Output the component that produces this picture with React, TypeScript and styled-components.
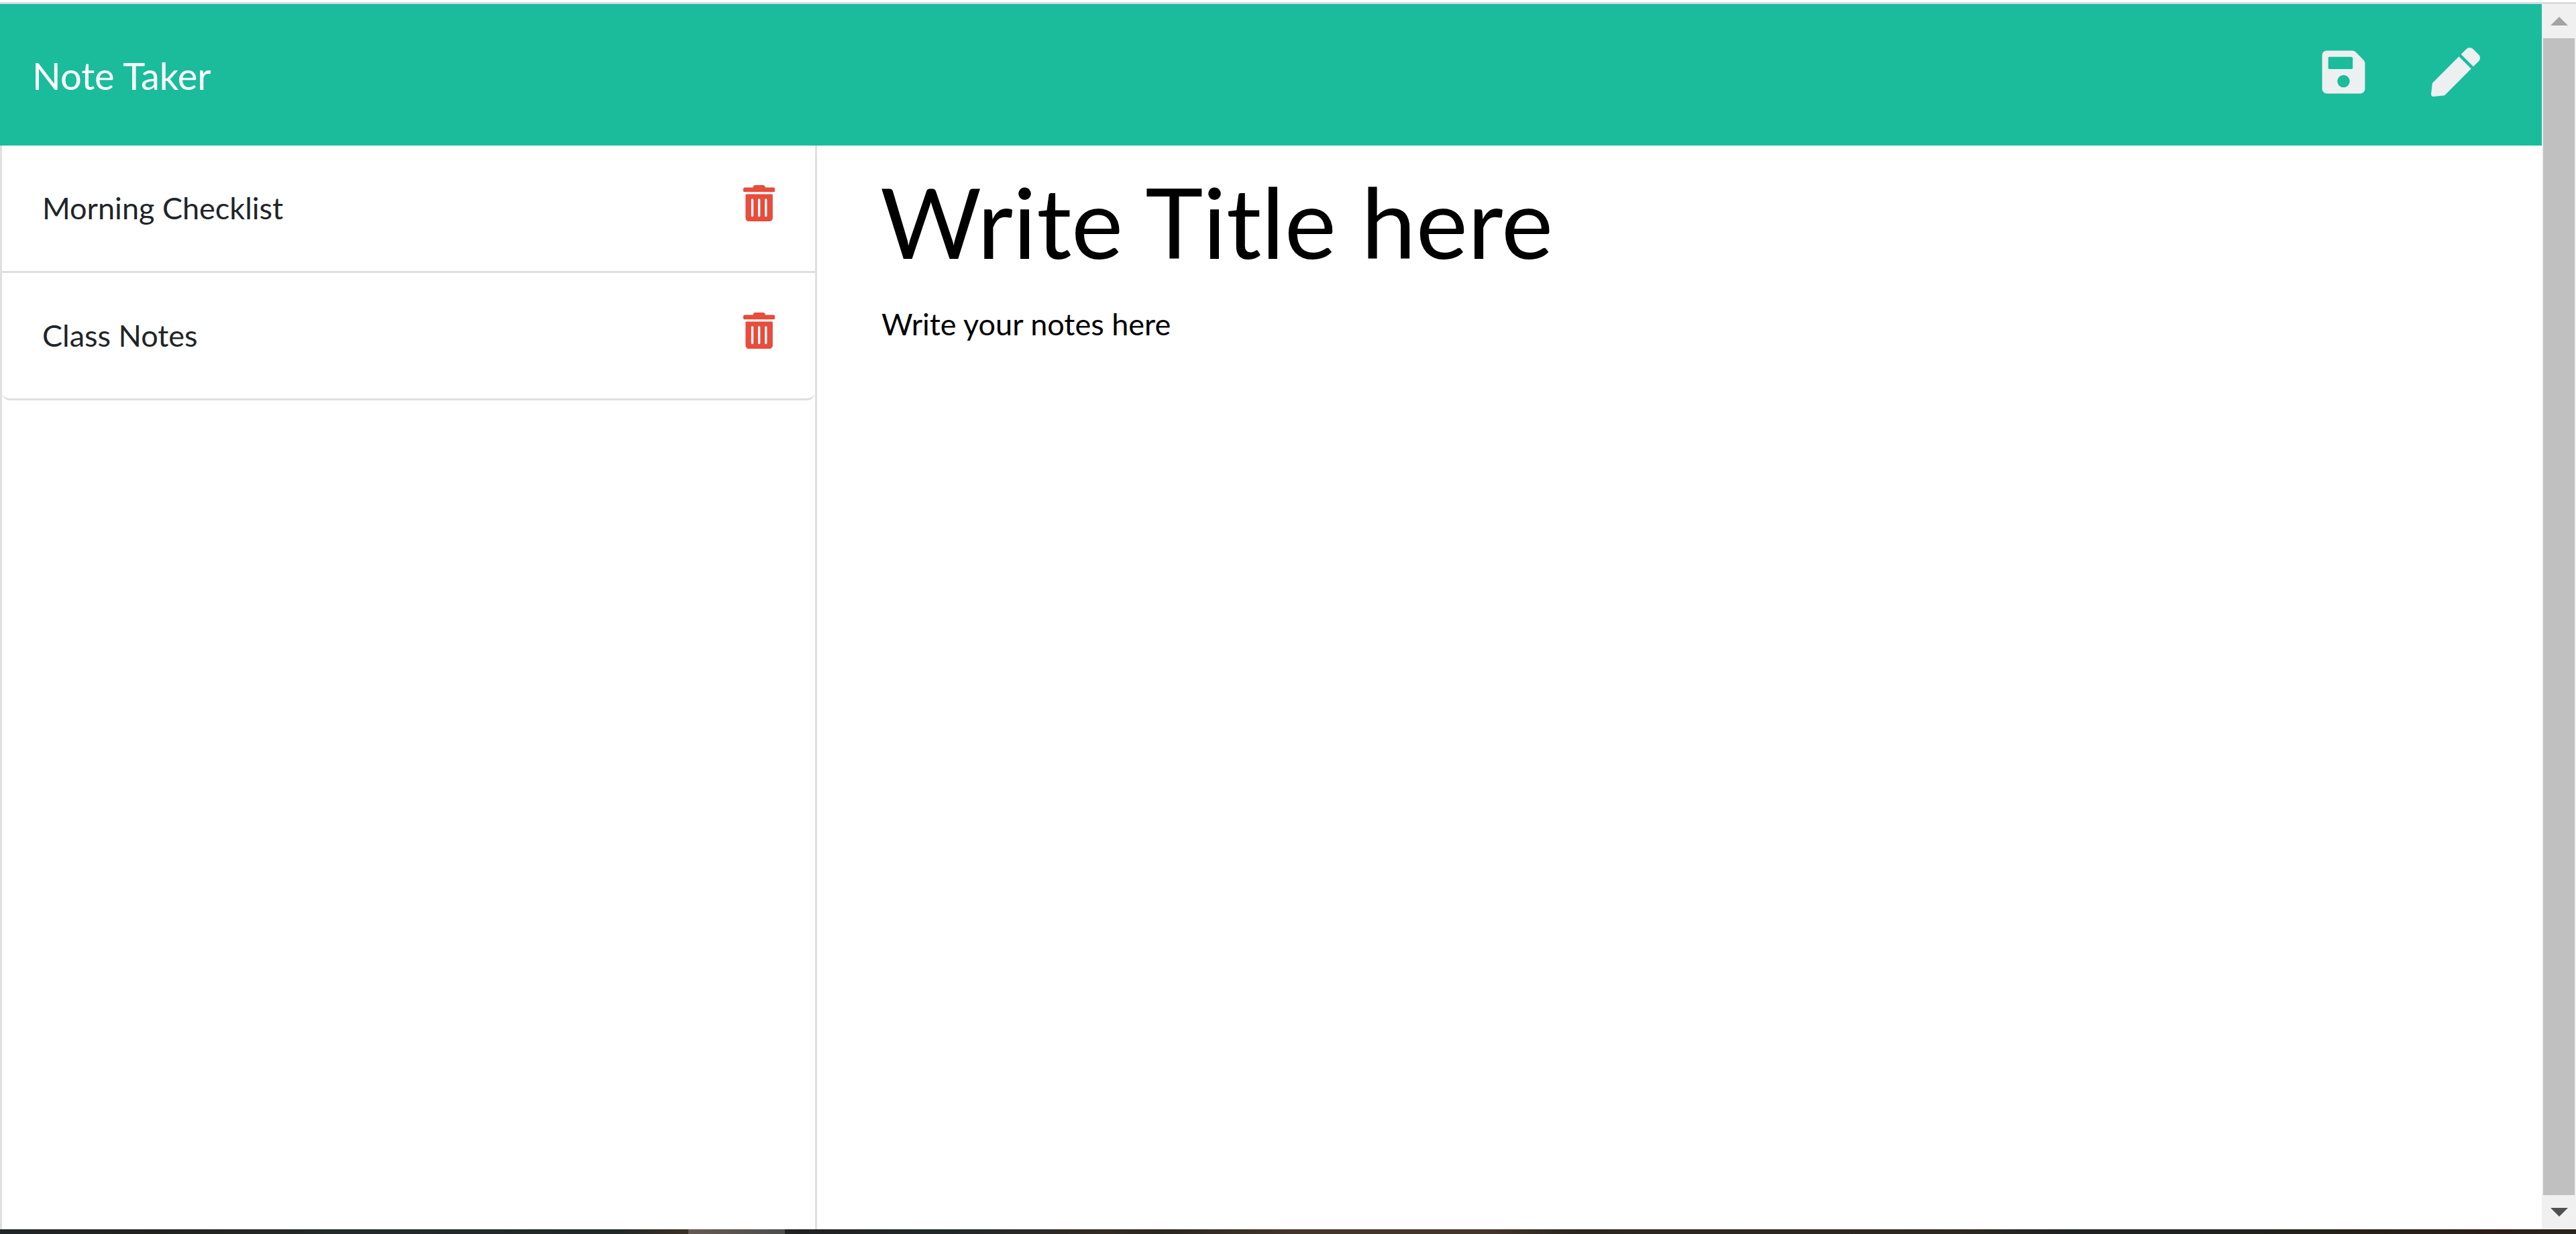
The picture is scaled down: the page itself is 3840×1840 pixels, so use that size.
import React, { useState } from "react";
import styled, { createGlobalStyle } from "styled-components";
import { FaPen, FaSave } from "react-icons/fa";

const colors = {
  brand: "#1abc9c",
  icon: "#ecf0f1",
  danger: "#e74c3c",
  ink: "#212529",
  line: "#dfdfdf",
};

const GlobalStyle = createGlobalStyle`
  *, *::before, *::after { box-sizing: border-box; }
  body { margin: 0; background: #fff; overflow: hidden; }
  body, input, textarea, button { font-family: Lato, "Open Sans", sans-serif; }
`;

const Screen = styled.div`
  display: flex;
  flex-direction: column;
  height: 100vh;
`;

const TopEdge = styled.div`
  flex: none;
  height: 6px;
  background: #fff;
  border-bottom: 3px solid #dadce0;
`;

const Viewport = styled.div`
  display: flex;
  flex: 1;
  min-height: 0;
`;

const Page = styled.div`
  display: flex;
  flex-direction: column;
  flex: 1;
  min-width: 0;
`;

const Navbar = styled.header`
  display: flex;
  align-items: center;
  justify-content: space-between;
  padding: 48px 92px 48px 48px;
  background: ${colors.brand};
`;

const Brand = styled.a`
  color: #fff;
  font-size: 56px;
  line-height: 84px;
  padding: 17px 0 14px;
  text-decoration: none;
`;

const NavActions = styled.div`
  display: flex;
  align-items: center;
  gap: 94px;
  padding-bottom: 8px;
`;

const IconButton = styled.button<{ $color: string; $size: number }>`
  display: flex;
  padding: 0;
  border: 0;
  background: none;
  color: ${(p) => p.$color};
  cursor: pointer;

  svg {
    display: block;
    width: auto;
    height: ${(p) => p.$size}px;
    fill: currentColor;
  }
`;

const Columns = styled.div`
  display: flex;
  flex: 1;
  min-height: 0;
`;

const SidebarColumn = styled.aside`
  display: flex;
  width: calc(100% / 3);
  padding-right: 45px;
`;

const ListCard = styled.div`
  flex: 1;
  border: solid ${colors.line};
  border-width: 0 3px;
`;

const NoteList = styled.ul`
  margin: 0;
  padding: 0;
  list-style: none;
`;

const NoteItem = styled.li`
  display: flex;
  align-items: flex-start;
  justify-content: space-between;
  padding: 59px 60px 60px;
  border-bottom: 3px solid ${colors.line};

  &:last-child {
    border-radius: 0 0 12px 12px;
  }
`;

const NoteName = styled.span`
  color: ${colors.ink};
  font-size: 45px;
  line-height: 68px;
  cursor: pointer;
`;

const Editor = styled.main`
  display: flex;
  flex-direction: column;
  flex: 1;
  min-width: 0;
  padding: 26px 45px 0;
`;

const TitleInput = styled.input`
  width: 100%;
  height: 174px;
  padding: 0 4px;
  border: 0;
  outline: 0;
  color: #000;
  font-size: 146px;
  line-height: 174px;

  &::placeholder { color: #000; opacity: 1; }
`;

const BodyInput = styled.textarea`
  flex: 1;
  width: 100%;
  padding: 32px 6px;
  border: 0;
  outline: 0;
  resize: none;
  color: #000;
  font-size: 45px;
  line-height: 68px;

  &::placeholder { color: #000; opacity: 1; }
`;

const Scrollbar = styled.div`
  display: flex;
  flex-direction: column;
  flex: none;
  width: 51px;
  padding: 0 2px;
  background: #f0f0f0;
`;

const ScrollButton = styled.button`
  display: flex;
  align-items: center;
  justify-content: center;
  height: 51px;
  padding: 0;
  border: 0;
  background: none;
`;

const Arrow = styled.span<{ $down?: boolean }>`
  border: solid transparent;
  border-width: ${(p) => (p.$down ? "13px 13px 0" : "0 13px 13px")};
  border-${(p) => (p.$down ? "top" : "bottom")}-color: ${(p) =>
    p.$down ? "#505050" : "#a3a3a3"};
`;

const Thumb = styled.div`
  flex: 1;
  background: #c0c0c0;
`;

const Taskbar = styled.footer`
  display: flex;
  flex: none;
  height: 7px;
  background: linear-gradient(
    90deg,
    #202527 0%, #22231f 6%, #242a2b 14%, #222828 24%, #3a3026 26.5%,
    #202222 31%, #22282a 37%, #332a24 43%, #2a2620 45%, #42352a 50%,
    #42352a 58%, #2b2620 61%, #2e2822 76%, #1f2222 80%, #1e2220 85%,
    #27211a 92%, #2c1e19 97%, #29251f 100%
  );
`;

const ActiveTask = styled.div`
  width: 144px;
  margin-left: 1026px;
  background: linear-gradient(90deg, #665954, #4c4e4d);
`;

function TrashIcon() {
  return (
    <svg viewBox="0 0 448 512" aria-hidden="true">
      <path d="M0 84V56c0-13.3 10.7-24 24-24h112l9.400-18.700c4-8.200 12.300-13.300 21.400-13.300h114.300c9.100 0 17.400 5.100 21.500 13.300L312 32h112c13.300 0 24 10.700 24 24v28c0 6.600-5.400 12-12 12H12C5.400 96 0 90.600 0 84zm416 56v324c0 26.500-21.500 48-48 48H80c-26.500 0-48-21.500-48-48V140c0-6.600 5.400-12 12-12h360c6.600 0 12 5.400 12 12zm-272 68c0-8.800-7.200-16-16-16s-16 7.200-16 16v224c0 8.800 7.200 16 16 16s16-7.200 16-16V208zm96 0c0-8.800-7.200-16-16-16s-16 7.200-16 16v224c0 8.800 7.200 16 16 16s16-7.200 16-16V208zm96 0c0-8.800-7.200-16-16-16s-16 7.200-16 16v224c0 8.800 7.200 16 16 16s16-7.200 16-16V208z" />
    </svg>
  );
}

export default function App() {
  const [notes, setNotes] = useState(["Morning Checklist", "Class Notes"]);
  const [title, setTitle] = useState("");
  const [text, setText] = useState("");

  const save = () => {
    if (title) setNotes([...notes, title]);
  };
  const clear = () => {
    setTitle("");
    setText("");
  };

  return (
    <>
      <GlobalStyle />
      <Screen>
        <TopEdge />
        <Viewport>
          <Page>
            <Navbar>
              <Brand href="#">Note Taker</Brand>
              <NavActions>
                <IconButton $color={colors.icon} $size={73} aria-label="Save note" onClick={save}>
                  <FaSave />
                </IconButton>
                <IconButton $color={colors.icon} $size={73} aria-label="New note" onClick={clear}>
                  <FaPen />
                </IconButton>
              </NavActions>
            </Navbar>
            <Columns>
              <SidebarColumn>
                <ListCard>
                  <NoteList>
                    {notes.map((note, i) => (
                      <NoteItem key={i}>
                        <NoteName>{note}</NoteName>
                        <IconButton
                          $color={colors.danger}
                          $size={54}
                          aria-label={`Delete ${note}`}
                          onClick={() => setNotes(notes.filter((_, n) => n !== i))}
                        >
                          <TrashIcon />
                        </IconButton>
                      </NoteItem>
                    ))}
                  </NoteList>
                </ListCard>
              </SidebarColumn>
              <Editor>
                <TitleInput
                  aria-label="Note title"
                  placeholder="Write Title here"
                  value={title}
                  onChange={(e) => setTitle(e.target.value)}
                />
                <BodyInput
                  aria-label="Note text"
                  placeholder="Write your notes here"
                  value={text}
                  onChange={(e) => setText(e.target.value)}
                />
              </Editor>
            </Columns>
          </Page>
          <Scrollbar>
            <ScrollButton aria-label="Scroll up">
              <Arrow />
            </ScrollButton>
            <Thumb />
            <ScrollButton aria-label="Scroll down">
              <Arrow $down />
            </ScrollButton>
          </Scrollbar>
        </Viewport>
        <Taskbar>
          <ActiveTask />
        </Taskbar>
      </Screen>
    </>
  );
}
